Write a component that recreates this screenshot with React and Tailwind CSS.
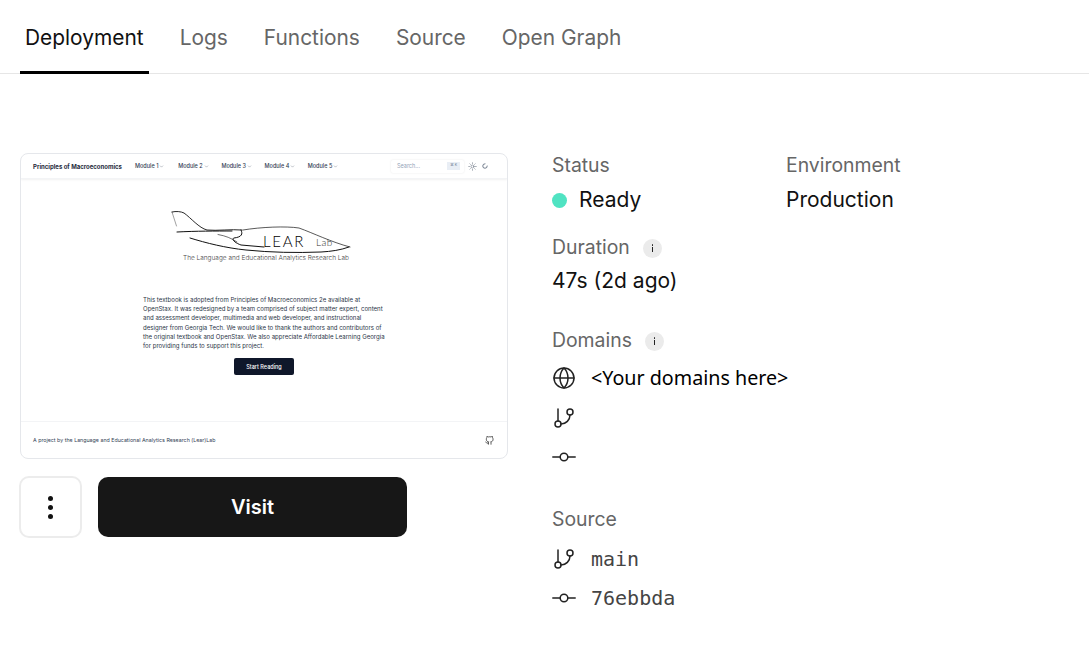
import React from "react";
import { Globe, Sun, ChevronDown } from "lucide-react";
import { FiGitBranch, FiGithub } from "react-icons/fi";

const tabs = ["Deployment", "Logs", "Functions", "Source", "Open Graph"];
const modules = ["Module 1", "Module 2", "Module 3", "Module 4", "Module 5"];

function Plane() {
  return (
    <svg width="180" height="46" viewBox="0 0 180 46" fill="none" stroke="#111" strokeLinecap="round" strokeLinejoin="round" className="block">
      <path d="M1 2 C5 1 10 1.5 13 3 C20 8 28 18 36 20 C46 21 60 19 71 20" strokeWidth="0.9" />
      <path d="M1 2 L5.5 16" strokeWidth="0.4" />
      <path d="M6 22 C25 21 45 21 61 21" strokeWidth="1" />
      <path d="M70 20 C72 24 71 27 63 28 C60 29 64 33 70 35 L93 37" strokeWidth="1" />
      <path d="M47 24.5 C55 26 60 28 66 32" strokeWidth="0.6" />
      <path d="M19 28 C35 33 55 38 75 40 C100 42.5 125 43 150 42 C160 41.5 170 40 178 37" strokeWidth="1" />
      <path d="M72 20 C90 17 115 16 128 18 C142 23 160 32 179 37" strokeWidth="0.7" />
    </svg>
  );
}

function MiniSite() {
  return (
    <div className="w-[488px] h-[306px] flex flex-col border border-gray-200 rounded-lg overflow-hidden bg-white font-['Inter',sans-serif]">
      <div className="h-[25px] shrink-0 flex items-center pl-3 pr-[19px] border-b border-gray-100 shadow-[0_1px_2px_rgba(0,0,0,0.06)]">
        <span className="text-[6px] font-bold text-[#1e293b] w-[102px] whitespace-nowrap">Principles of Macroeconomics</span>
        <div className="flex">
          {modules.map((m) => (
            <span key={m} className="flex items-center gap-[1px] text-[5.5px] font-medium text-[#334155] w-[43.2px] whitespace-nowrap">
              {m}
              <ChevronDown size={5} strokeWidth={1.5} />
            </span>
          ))}
        </div>
        <div className="ml-auto flex items-center">
          <div className="w-[73px] h-[13px] flex items-center justify-between pl-[6px] pr-[4px] rounded-[2px] shadow-[0_0_2px_rgba(0,0,0,0.1)]">
            <span className="text-[5.5px] text-[#94a3b8]">Search...</span>
            <span className="bg-[#e9eef5] text-[3.5px] text-[#64748b] px-[3px] py-[1px] whitespace-nowrap">⌘ K</span>
          </div>
          <Sun size={9} strokeWidth={1.2} className="ml-[4px] text-[#334155]" />
          <svg width="6" height="6" viewBox="0 0 24 24" fill="none" stroke="#475569" strokeWidth="3" strokeLinecap="round" className="ml-[5px]">
            <path d="M12 3 A9 9 0 1 0 21 12" />
          </svg>
        </div>
      </div>

      <div className="flex-1 flex flex-col items-start">
        <div className="relative mt-[31px] ml-[150px] w-[180px] h-[46px]">
          <Plane />
          <span className="absolute left-[92px] top-[24px] text-[15px] leading-[15px] font-light font-['Lato',sans-serif] text-black tracking-[1.7px]">LEAR</span>
          <span className="absolute left-[145px] top-[27px] text-[10px] leading-[11px] font-light font-['Lato',sans-serif] text-[#333] tracking-[0.4px]">Lab</span>
        </div>
        <p className="-mt-[2px] ml-[162px] text-[6.5px] leading-[9px] font-light font-['Inter',sans-serif] text-[#444] tracking-[0px] whitespace-nowrap">
          The Language and Educational Analytics Research Lab
        </p>
        <p className="mt-[32px] ml-[122px] text-[6.07px] leading-[9.2px] text-[#2b3648] whitespace-nowrap">
          This textbook is adopted from Principles of Macroeconomics 2e available at
          <br />
          OpenStax. It was redesigned by a team comprised of subject matter expert, content
          <br />
          and assessment developer, multimedia and web developer, and instructional
          <br />
          designer from Georgia Tech. We would like to thank the authors and contributors of
          <br />
          the original textbook and OpenStax. We also appreciate Affordable Learning Georgia
          <br />
          for providing funds to support this project.
        </p>
        <div className="mt-[8px] ml-[213px] w-[60px] h-[17px] flex items-center justify-center rounded-[2px] bg-[#0f172a] text-white text-[5.5px] font-medium">
          Start Reading
        </div>
      </div>

      <div className="h-[37px] shrink-0 flex items-center justify-between pl-3 pr-[13px] pt-px border-t border-gray-100">
        <span className="text-[5.3px] text-[#334155] whitespace-nowrap">A project by the Language and Educational Analytics Research (Lear)Lab</span>
        <FiGithub size={9} strokeWidth={1.8} className="text-[#111]" />
      </div>
    </div>
  );
}

function CommitIcon() {
  return (
    <svg width="24" height="24" viewBox="0 0 24 24" fill="none" stroke="#222" strokeWidth="1.5" strokeLinecap="round">
      <circle cx="12" cy="12" r="3.8" />
      <line x1="0.8" y1="12" x2="8.2" y2="12" />
      <line x1="15.8" y1="12" x2="23.2" y2="12" />
    </svg>
  );
}

function InfoDot() {
  return (
    <span className="ml-[13px] w-[19px] h-[19px] rounded-full bg-[#ebebeb] flex flex-col items-center justify-center gap-[1px]">
      <span className="w-[1.5px] h-[1.5px] bg-[#222] rounded-full" />
      <span className="w-[1.5px] h-[5px] bg-[#222]" />
    </span>
  );
}

function Label({ children, info }) {
  return (
    <div className="flex items-center h-[24px] pt-[2px] text-[19.4px] text-[#666]">
      {children}
      {info ? <InfoDot /> : null}
    </div>
  );
}

export default function App() {
  return (
    <div className="w-[1089px] h-[647px] bg-white font-['Inter',sans-serif] overflow-hidden">
      <div className="h-[74px] flex items-end gap-[26px] pl-[20px] border-b border-[#e6e6e6]">
        {tabs.map((t, i) => (
          <div
            key={t}
            className={
              i === 0
                ? "h-[74px] -mb-px px-[5px] pt-[24px] border-b-[3px] border-black text-[20.9px] leading-[27px] text-[#111]"
                : "h-[74px] -mb-px px-[5px] pt-[24px] text-[20.9px] leading-[27px] text-[#666]"
            }
          >
            {t}
          </div>
        ))}
      </div>

      <div className="flex pl-[20px] pt-[79px]">
        <div className="w-[488px] shrink-0">
          <MiniSite />
          <div className="flex items-center mt-[17px]">
            <button className="-ml-px w-[63px] h-[62px] flex flex-col items-center justify-center gap-[4px] rounded-[10px] border-2 border-[#ececec] bg-white">
              <span className="w-[5px] h-[5px] rounded-full bg-[#111]" />
              <span className="w-[5px] h-[5px] rounded-full bg-[#111]" />
              <span className="w-[5px] h-[5px] rounded-full bg-[#111]" />
            </button>
            <button className="ml-[16px] w-[309px] h-[60px] rounded-[10px] bg-[#171717] text-white text-[20px] font-semibold">
              Visit
            </button>
          </div>
        </div>

        <div className="ml-[44px] w-[500px]">
          <div className="flex">
            <div className="w-[234px]">
              <Label>Status</Label>
              <div className="flex items-center h-[30px] mt-[8px] text-[21px] text-[#111]">
                <span className="w-[15px] h-[15px] rounded-full bg-[#50e3c2] mr-[12px]" />
                Ready
              </div>
            </div>
            <div>
              <Label>Environment</Label>
              <div className="flex items-center h-[30px] mt-[8px] text-[21px] text-[#111]">Production</div>
            </div>
          </div>

          <div className="mt-[20px]">
            <Label info>Duration</Label>
            <div className="flex items-center h-[30px] mt-[7px] text-[21px] text-[#111]">47s (2d ago)</div>
          </div>

          <div className="mt-[32px]">
            <Label info>Domains</Label>
            <div className="flex items-center h-[24px] mt-[14px]">
              <Globe size={24} strokeWidth={1.5} className="text-[#222]" />
              <span className="ml-[15px] text-[19.7px] text-black font-['Noto_Sans',sans-serif] whitespace-nowrap">&lt;Your domains here&gt;</span>
            </div>
            <div className="flex items-center h-[24px] mt-[16px]">
              <FiGitBranch size={24} strokeWidth={1.5} className="text-[#222]" />
            </div>
            <div className="flex items-center h-[24px] mt-[15px]">
              <CommitIcon />
            </div>
          </div>

          <div className="mt-[38px]">
            <Label>Source</Label>
            <div className="flex items-center h-[24px] mt-[16px]">
              <FiGitBranch size={24} strokeWidth={1.5} className="text-[#222]" />
              <span className="ml-[15px] text-[20px] text-[#444] font-['DejaVu_Sans_Mono',monospace]">main</span>
            </div>
            <div className="flex items-center h-[24px] mt-[15px]">
              <CommitIcon />
              <span className="ml-[15px] text-[20px] text-[#444] font-['DejaVu_Sans_Mono',monospace]">76ebbda</span>
            </div>
          </div>
        </div>
      </div>
    </div>
  );
}
